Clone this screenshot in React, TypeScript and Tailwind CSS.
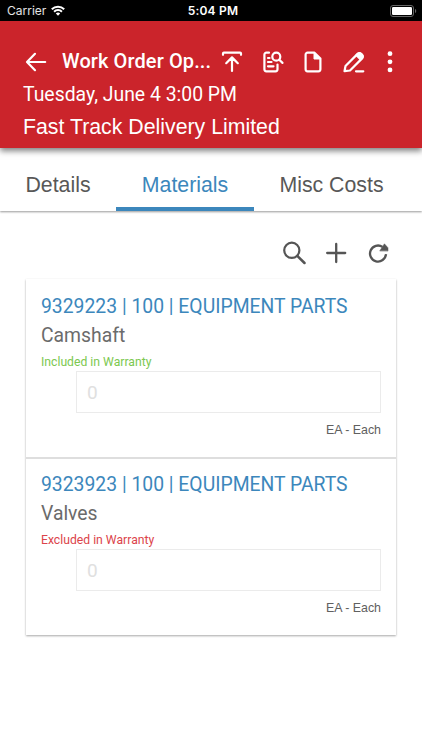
import { useState } from 'react';
import type { ReactNode } from 'react';

type Material = {
  id: string;
  title: string;
  name: string;
  covered: boolean;
  unit: string;
};

const materials: Material[] = [
  { id: '9329223', title: '9329223 | 100 | EQUIPMENT PARTS', name: 'Camshaft', covered: true, unit: 'EA - Each' },
  { id: '9323923', title: '9323923 | 100 | EQUIPMENT PARTS', name: 'Valves', covered: false, unit: 'EA - Each' },
];

const tabs = [
  { label: 'Details', className: 'w-[116px]' },
  { label: 'Materials', className: 'w-[138px]' },
  { label: 'Misc Costs', className: 'w-[155px]' },
];

function Icon({ children, className = 'size-6' }: { children: ReactNode; className?: string }) {
  return (
    <svg
      viewBox="0 0 24 24"
      fill="none"
      stroke="currentColor"
      strokeWidth="2.2"
      strokeLinecap="round"
      strokeLinejoin="round"
      className={`shrink-0 ${className}`}
    >
      {children}
    </svg>
  );
}

function StatusBar() {
  return (
    <div className="grid h-[21px] grid-cols-3 items-center bg-black pl-[7px] pr-[5px] font-['Inter',sans-serif] text-white">
      <div className="flex items-center gap-[5px]">
        <span className="text-[12px] leading-[21px] text-white/90">Carrier</span>
        <svg viewBox="0 0 14 11" className="h-[11px] w-[14px]" fill="none" stroke="currentColor" strokeWidth="2">
          <path d="M0.8 4.2a8.8 8.8 0 0 1 12.4 0" />
          <path d="M3.1 6.7a5.5 5.5 0 0 1 7.8 0" />
          <path d="M7 10.8 4.8 8.5a3.1 3.1 0 0 1 4.400 0Z" fill="currentColor" stroke="none" />
        </svg>
      </div>
      <span className="whitespace-nowrap pl-[2px] text-center text-[12px] font-semibold leading-[21px] tracking-[0.2px]">5:04 PM</span>
      <div className="flex justify-end">
        <svg viewBox="0 0 27 12" className="h-[12px] w-[27px]">
          <rect x="0.5" y="0.5" width="23" height="11" rx="2.5" fill="none" stroke="#666" />
          <rect x="2" y="2" width="20" height="8" rx="1.2" fill="#fff" />
          <path d="M25 4c1.6.4 1.6 3.6 0 4Z" fill="#666" />
        </svg>
      </div>
    </div>
  );
}

function Header() {
  return (
    <header className="relative h-[127px] bg-[#cb242b] pl-[23px] text-white shadow-[0_3px_6px_rgba(0,0,0,0.5)]">
      <div className="flex h-[57px] items-end">
        <button aria-label="Back" className="mb-1 w-[39px] pl-px">
          <Icon>
            <path d="M21.2 12H3.2M11 3.800 3 12l8 8.200" />
          </Icon>
        </button>
        <h1 className="w-[158px] whitespace-nowrap font-['Roboto',sans-serif] text-[20px] font-medium leading-[34px] tracking-[0.1px]">Work Order Op...</h1>
        <div className="mb-1 flex gap-[16.6px]">
          <button aria-label="Upload">
            <Icon>
              <path d="M3 4.800V3.600Q3 2.700 3.900 2.700H20.100Q21 2.700 21 3.600V4.800M12 21V7.700M6.200 13.200l5.800-5.800 5.800 5.800" />
            </Icon>
          </button>
          <button aria-label="Find document">
            <Icon>
              <path d="M8 2.700H5.400a2 2 0 0 0-2 2v14.600a2 2 0 0 0 2 2H14.500a2 2 0 0 0 2-2V14.500M7 8h1.500M7 12h3.500M7 16.300h5.500" />
              <circle cx="15.300" cy="6.700" r="4" />
              <path d="m18.300 9.700 3.200 3.200" />
            </Icon>
          </button>
          <button aria-label="New document">
            <Icon>
              <path d="M13.500 2.700H6.600a2 2 0 0 0-2 2v14.600a2 2 0 0 0 2 2h10.800a2 2 0 0 0 2-2V8.600Z" />
              <path d="M13 2.700V9h6.400Z" fill="currentColor" strokeWidth="1" />
            </Icon>
          </button>
          <button aria-label="Edit">
            <Icon>
              <path d="M2.500 21.200 3.500 16 15.600 3.900a2.600 2.600 0 0 1 3.700 0l.8.8a2.600 2.600 0 0 1 0 3.700L8 20.500ZM14 21.300h7.300" />
              <path d="m14 5.300 1.600-1.600a2.600 2.600 0 0 1 3.700 0l.8.8a2.600 2.600 0 0 1 0 3.700L18.500 9.800Z" fill="currentColor" strokeWidth="1.500" />
            </Icon>
          </button>
          <button aria-label="More" className="-ml-[5px]">
            <Icon>
              <g fill="currentColor" stroke="none">
                <circle cx="13" cy="3.700" r="2.400" />
                <circle cx="13" cy="11.800" r="2.400" />
                <circle cx="13" cy="19.900" r="2.400" />
              </g>
            </Icon>
          </button>
        </div>
      </div>
      <p className="font-['Roboto',sans-serif] text-[19.4px] leading-[33px]">Tuesday, June 4 3:00 PM</p>
      <p className="font-['Liberation_Sans',sans-serif] text-[21.3px] leading-[33px]">Fast Track Delivery Limited</p>
    </header>
  );
}

function MaterialRow({ item }: { item: Material }) {
  return (
    <li className="h-[178px] border-t-2 border-[#dedede] px-[15px] pt-[11px] first:border-transparent">
      <h2 className="whitespace-nowrap font-['Roboto',sans-serif] text-[19.35px] leading-[29px] text-[#3c87bc]">{item.title}</h2>
      <p className="font-['Roboto',sans-serif] text-[19.35px] leading-[29px] text-[#6b6b6b]">{item.name}</p>
      <p className={`pt-[3px] font-['Roboto',sans-serif] text-[12.2px] leading-[18px] ${item.covered ? 'text-[#7cc850]' : 'text-[#dc444b]'}`}>
        {item.covered ? 'Included in Warranty' : 'Excluded in Warranty'}
      </p>
      <div className="ml-[35px] h-[42px] border border-[#ebebeb] pl-[10px] font-['Roboto',sans-serif] text-[19px] leading-[41px] text-[#e0e0e0]">0</div>
      <p className="pt-[8px] text-right font-['Liberation_Sans',sans-serif] text-[12.4px] leading-[19px] text-[#606060]">{item.unit}</p>
    </li>
  );
}

export default function App() {
  const [activeTab, setActiveTab] = useState('Materials');

  return (
    <div className="h-[750px] w-full overflow-hidden bg-white">
      <StatusBar />
      <Header />

      {/* Tabs */}
      <nav className="flex h-[63px] font-['Liberation_Sans',sans-serif] text-[21.3px] shadow-[0_1px_2px_rgba(0,0,0,0.4)]">
        {tabs.map(tab => (
          <button
            key={tab.label}
            onClick={() => setActiveTab(tab.label)}
            className={`whitespace-nowrap border-b-4 pt-[16px] leading-[43px] ${tab.className} ${
              activeTab === tab.label ? 'border-[#3c87bc] text-[#3c87bc]' : 'border-transparent text-[#585858]'
            }`}
          >
            {tab.label}
          </button>
        ))}
      </nav>

      <main className="px-[26px]">
        {/* List actions */}
        <div className="flex h-[68px] items-center justify-end gap-[18px] pr-[6px] pt-4 text-[#555]">
          <button aria-label="Search">
            <Icon>
              <circle cx="9.800" cy="9.300" r="7.600" />
              <path d="m15.300 14.800 7.200 7.200" strokeWidth="2.500" />
            </Icon>
          </button>
          <button aria-label="Add">
            <Icon>
              <path d="M12.200 3v18M3.200 12h18" strokeWidth="2.300" />
            </Icon>
          </button>
          <button aria-label="Refresh">
            <Icon>
              <path d="M20 13.200A8 8 0 1 1 16.500 5.900" strokeWidth="2.300" strokeLinecap="butt" />
              <path d="M13.900 9.700 18.400 2.800l3.600 4v2.900Z" fill="currentColor" strokeWidth="0.500" />
            </Icon>
          </button>
        </div>

        <ul className="w-[370px] shadow-[0_1px_2px_rgba(0,0,0,0.35)]">
          {materials.map(item => (
            <MaterialRow key={item.id} item={item} />
          ))}
        </ul>
      </main>
    </div>
  );
}
